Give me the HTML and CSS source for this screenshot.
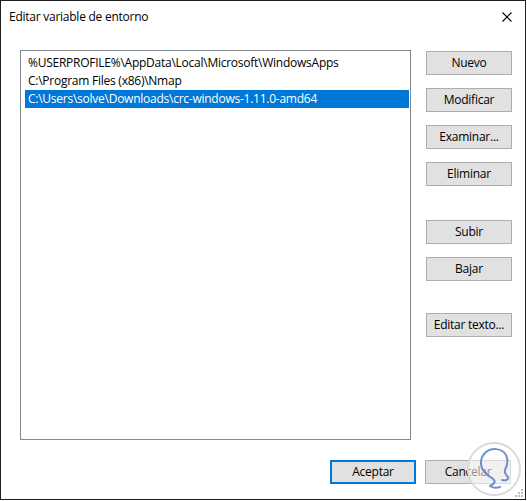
FILE: index.html
```html
<!DOCTYPE html>
<html lang="es">
<head>
<meta charset="utf-8">
<title>Editar variable de entorno</title>
<link rel="stylesheet" href="styles.css">
</head>
<body>
<div class="window">
  <div class="titlebar">
    <span class="title">Editar variable de entorno</span>
    <span class="close">
      <svg width="10" height="10" viewBox="0 0 10 10"><path d="M0.5 0.5 L9.5 9.5 M9.5 0.5 L0.5 9.5" stroke="#000" stroke-width="1.1" fill="none"/></svg>
    </span>
  </div>
  <div class="main">
    <div class="listbox">
      <div class="row">%USERPROFILE%\AppData\Local\Microsoft\WindowsApps</div>
      <div class="row">C:\Program Files (x86)\Nmap</div>
      <div class="row selected">C:\Users\solve\Downloads\crc-windows-1.11.0-amd64</div>
    </div>
    <div class="side">
      <div class="group">
        <button class="btn">Nuevo</button>
        <button class="btn">Modificar</button>
        <button class="btn">Examinar...</button>
        <button class="btn">Eliminar</button>
      </div>
      <div class="group group-move">
        <button class="btn">Subir</button>
        <button class="btn">Bajar</button>
      </div>
      <div class="group group-edit">
        <button class="btn">Editar texto...</button>
      </div>
    </div>
  </div>
  <div class="footer">
    <button class="btn btn-default">Aceptar</button>
    <button class="btn">Cancelar</button>
  </div>
  <div class="watermark">
    <svg width="60" height="60" viewBox="0 0 60 60">
      <circle cx="30" cy="30" r="26" fill="rgba(255,255,255,0.55)" stroke="#d9d9de" stroke-width="2"/>
      <path d="M22 34 C16 30 15 20 21 14 C27 8 38 9 42 16 C45 22 43 27 41 31 C40 34 42 36 44 38 C45 41 41 42 38 41 M22 34 C24 38 28 38 30 41 C32 44 28 46 26 47 C29 49 33 49 36 48" fill="none" stroke="#5b7cc2" stroke-width="2" stroke-linecap="round" stroke-linejoin="round" opacity="0.85"/>
    </svg>
  </div>
  <div class="grip">
    <svg width="10" height="10" viewBox="0 0 10 10">
      <rect x="7" y="1" width="2" height="2" fill="#bdbdbd"/>
      <rect x="4" y="4" width="2" height="2" fill="#bdbdbd"/>
      <rect x="7" y="4" width="2" height="2" fill="#bdbdbd"/>
      <rect x="1" y="7" width="2" height="2" fill="#bdbdbd"/>
      <rect x="4" y="7" width="2" height="2" fill="#bdbdbd"/>
      <rect x="7" y="7" width="2" height="2" fill="#bdbdbd"/>
    </svg>
  </div>
</div>
</body>
</html>
```

FILE: styles.css
```css
html, body {
  margin: 0;
  padding: 0;
  background: #ffffff;
}

body {
  font-family: "Open Sans", "Noto Sans", "Liberation Sans", sans-serif;
  font-size: 12px;
  color: #000;
}

.window {
  position: relative;
  box-sizing: border-box;
  width: 526px;
  height: 500px;
  border: 1px solid #1f1f1f;
  background: #fff;
  display: flex;
  flex-direction: column;
}

.titlebar {
  height: 30px;
  display: flex;
  align-items: center;
  justify-content: space-between;
  padding-left: 8px;
  padding-right: 13px;
}

.title {
  font-size: 12px;
  letter-spacing: -0.25px;
  padding-top: 1px;
}

.close {
  display: flex;
  padding-top: 2px;
}

.main {
  display: flex;
  margin-top: 19px;
  padding-left: 19px;
  gap: 15px;
}

.listbox {
  box-sizing: border-box;
  width: 391px;
  height: 390px;
  border: 1px solid #828790;
  padding: 3px 1px 0 4px;
}

.row {
  height: 18px;
  line-height: 18px;
  padding-left: 3px;
  white-space: nowrap;
  letter-spacing: -0.25px;
}

.row.selected {
  background: #0078d7;
  color: #fff;
}

.side {
  display: flex;
  flex-direction: column;
  padding-top: 1px;
}

.group {
  display: flex;
  flex-direction: column;
  gap: 13px;
}

.group-move {
  margin-top: 34px;
}

.group-edit {
  margin-top: 32px;
}

.btn {
  box-sizing: border-box;
  width: 86px;
  height: 24px;
  margin: 0;
  padding: 0;
  border: 1px solid #adadad;
  background: #e1e1e1;
  font-family: inherit;
  font-size: 12px;
  letter-spacing: -0.25px;
  color: #000;
  line-height: 20px;
}

.btn-default {
  border: 2px solid #0078d7;
}

.footer {
  display: flex;
  justify-content: flex-end;
  gap: 9px;
  margin-top: 20px;
  padding-right: 14px;
}

.watermark {
  position: absolute;
  right: 1px;
  bottom: 0;
  width: 60px;
  height: 60px;
}

.grip {
  position: absolute;
  right: 1px;
  bottom: 1px;
  display: flex;
}
```
